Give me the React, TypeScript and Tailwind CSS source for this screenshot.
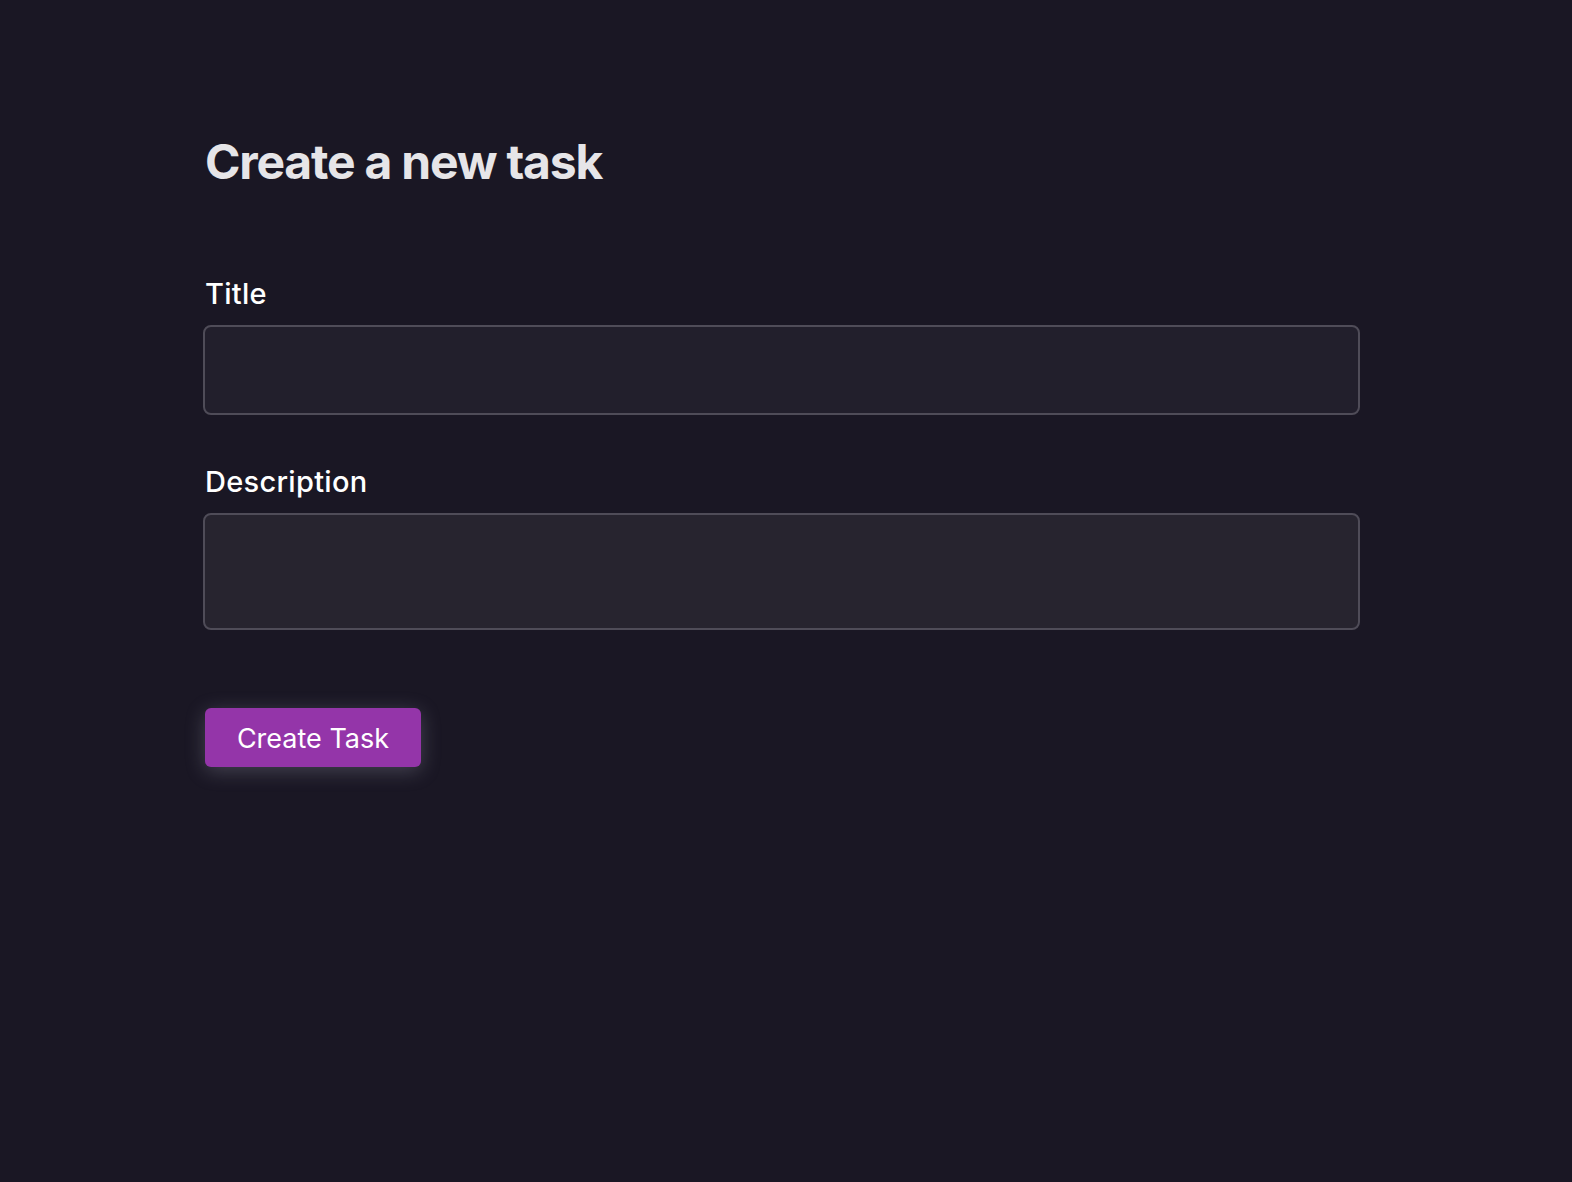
import React from "react";

export default function App() {
  return (
    <div className="min-h-screen w-full bg-[#1a1724]" style={{ fontFamily: "Inter, 'Noto Sans', sans-serif" }}>
      <div className="ml-[203px] w-[1157px] pt-[138px]">
        <h1 className="pl-[2px] text-[48px] leading-[48px] font-bold tracking-[-0.025em] text-[#e6e5e8]">
          Create a new task
        </h1>
        <form className="mt-[90px] flex flex-col" onSubmit={(e) => e.preventDefault()}>
          <label className="pl-[2px] text-[29px] leading-[36px] font-medium tracking-[0.01em] text-white">Title</label>
          <input
            type="text"
            className="mt-[13px] h-[90px] w-full rounded-[8px] border-2 border-[#4f4c58] bg-[#221f2c] px-4 text-[24px] text-white outline-none"
          />
          <label className="mt-[49px] pl-[2px] text-[29px] leading-[36px] font-medium tracking-[0.01em] text-white">Description</label>
          <textarea
            className="mt-[13px] h-[117px] w-full resize-none rounded-[8px] border-2 border-[#4f4c58] bg-[#27242f] px-4 py-3 text-[24px] text-white outline-none"
          />
          <div className="mt-[78px] pl-[2px]">
            <button
              type="submit"
              className="h-[59px] w-[216px] rounded-[6px] bg-[#9435a9] pt-[3px] text-[27px] font-normal text-white shadow-[0_4px_20px_rgba(170,170,190,0.3)]"
            >
              Create Task
            </button>
          </div>
        </form>
      </div>
    </div>
  );
}
